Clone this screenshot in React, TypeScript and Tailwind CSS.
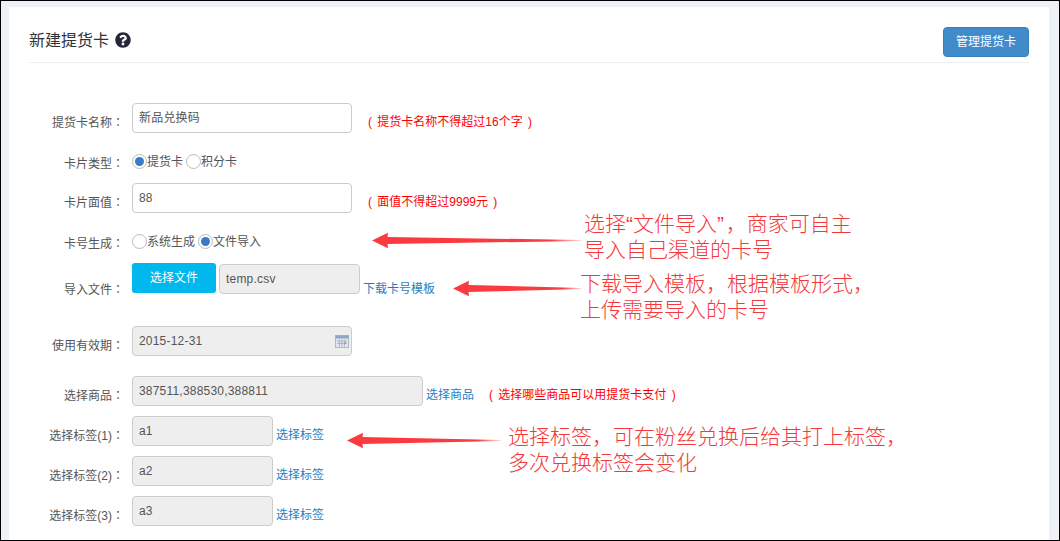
import { ReactNode } from "react";
import { FaQuestionCircle } from "react-icons/fa";

const FONT = "font-['Liberation_Sans','Noto_Sans_CJK_SC',sans-serif]";

function Arrow({ x, y, width, id }: { x: number; y: number; width: number; id: string }) {
  return (
    <svg
      className="absolute"
      style={{ left: x, top: y }}
      width={width}
      height={18}
      viewBox={`0 0 ${width} 18`}
    >
      <defs>
        <linearGradient id={id} x1="0" x2="1" y1="0" y2="0">
          <stop offset="0" stopColor="#fb3a3f" />
          <stop offset="0.85" stopColor="#fb3a3f" />
          <stop offset="1" stopColor="#fb3a3f" stopOpacity="0.15" />
        </linearGradient>
      </defs>
      <path
        d={`M0 8.5 L16 0.8 L15.5 5 L${width} 8 L${width} 9 L15.5 12 L16 16.2 Z`}
        fill={`url(#${id})`}
      />
    </svg>
  );
}

function Note({ x, y, lines }: { x: number; y: number; lines: string[] }) {
  return (
    <div
      className="absolute text-[21px] leading-[26px] font-light whitespace-nowrap text-[#f5383c]"
      style={{ left: x, top: y }}
    >
      {lines.map((l) => (
        <div key={l}>{l}</div>
      ))}
    </div>
  );
}

function Row({
  label,
  labelTop = "pt-[9px]",
  className = "",
  children,
}: {
  label: string;
  labelTop?: string;
  className?: string;
  children: ReactNode;
}) {
  return (
    <div className={`flex h-[30px] items-start ${className}`}>
      <label className={`w-[95px] shrink-0 text-right text-xs leading-5 text-[#555] ${labelTop}`}>
        {label}
        <span className="font-['Noto_Sans_CJK_TC',sans-serif]">：</span>
      </label>
      <div className="ml-2 flex h-full items-start">{children}</div>
    </div>
  );
}

function Field({
  value,
  width,
  disabled = true,
  children,
}: {
  value: string;
  width: string;
  disabled?: boolean;
  children?: ReactNode;
}) {
  return (
    <div
      className={`relative flex h-[30px] items-center rounded border border-[#ccc] px-[6px] text-xs tracking-[0.2px] text-[#555] ${width} ${
        disabled ? "bg-[#eee]" : "bg-white"
      }`}
    >
      {value}
      {children}
    </div>
  );
}

function Radio({ label, checked = false }: { label: string; checked?: boolean }) {
  return (
    <span className="flex items-center">
      <span className="flex size-[15px] items-center justify-center rounded-full border border-[#bbb] bg-white">
        {checked && <span className="size-[9px] rounded-full bg-[#3a7bc8]" />}
      </span>
      <span className="pt-[1px] text-xs leading-5 text-[#555]">{label}</span>
    </span>
  );
}

function LinkText({ children, className = "pt-[9px]" }: { children: ReactNode; className?: string }) {
  return (
    <a className={`ml-[3px] text-xs leading-5 whitespace-nowrap text-[#1f7ec2] ${className}`}>{children}</a>
  );
}

function Hint({ children, className = "" }: { children: ReactNode; className?: string }) {
  return (
    <span className={`pt-[9px] text-xs leading-5 whitespace-nowrap text-[#f00] [word-spacing:2px] ${className}`}>
      {children}
    </span>
  );
}

export default function App() {
  return (
    <div className={`relative flex h-[541px] w-[1060px] flex-col overflow-hidden border border-black bg-[#eef1f5] pt-[6px] pr-[10px] pl-2 ${FONT}`}>
      <div className="flex-1 bg-white px-5 pt-5">
        {/* Header */}
        <div className="flex h-[36px] items-start justify-between border-b border-[#eee]">
          <div className="flex h-[26px] items-center">
            <h1 className="pt-[2px] text-base leading-6 text-[#333]">新建提货卡</h1>
            <FaQuestionCircle className="ml-[6px] text-[16px] text-[#26263a]" />
          </div>
          <button className="h-[30px] w-[86px] rounded border border-[#3a7fbd] bg-[#428bca] text-xs text-white">
            管理提货卡
          </button>
        </div>

        {/* Form */}
        <form className="pt-10">
          <Row label="提货卡名称">
            <Field value="新品兑换码" width="w-[220px]" disabled={false} />
            <Hint className="ml-4">( 提货卡名称不得超过16个字 )</Hint>
          </Row>
          <Row label="卡片类型" labelTop="pt-[7px]" className="mt-[13px]">
            <div className="flex h-full items-center gap-[3px] pt-[1px]">
              <Radio label="提货卡" checked />
              <Radio label="积分卡" />
            </div>
          </Row>
          <Row label="卡片面值" className="mt-[7px]">
            <Field value="88" width="w-[220px]" disabled={false} />
            <Hint className="ml-4">( 面值不得超过9999元 )</Hint>
          </Row>
          <Row label="卡号生成" labelTop="pt-[7px]" className="mt-[13px]">
            <div className="flex h-full items-center gap-[3px] pt-[1px]">
              <Radio label="系统生成" />
              <Radio label="文件导入" checked />
            </div>
          </Row>
          <Row label="导入文件" labelTop="pt-4" className="mt-[7px]">
            <div className="flex h-[30px] w-[84px] items-center justify-center rounded-[3px] bg-[#00b7ee] text-xs text-white">
              选择文件
            </div>
            <div className="mt-[1px] ml-[3px]">
              <Field value="temp.csv" width="w-[141px]" />
            </div>
            <LinkText className="pt-4">下载卡号模板</LinkText>
          </Row>
          <Row label="使用有效期" className="mt-[33px]">
            <Field value="2015-12-31" width="w-[220px]">
              <svg className="absolute top-[7px] right-[2px]" width="14" height="14" viewBox="0 0 14 14">
                <rect x="0.5" y="1.5" width="13" height="12" fill="#dfe6f0" stroke="#a9b8cc" />
                <rect x="0.5" y="1.5" width="13" height="3" fill="#8fa6c4" />
                <path d="M2 7h10M2 9.5h10M4.5 5.5v7M7 5.5v7M9.5 5.5v7" stroke="#a9b8cc" strokeWidth="1" />
                <rect x="9" y="8" width="2" height="2" fill="#e08a7a" />
              </svg>
            </Field>
          </Row>
          <Row label="选择商品" className="mt-5">
            <Field value="387511,388530,388811" width="w-[291px]" />
            <LinkText>选择商品</LinkText>
            <Hint className="ml-[15px]">( 选择哪些商品可以用提货卡支付 )</Hint>
          </Row>
          {["a1", "a2", "a3"].map((tag, i) => (
            <Row key={tag} label={`选择标签(${i + 1})`} className="mt-[10px]">
              <Field value={tag} width="w-[141px]" />
              <LinkText>选择标签</LinkText>
            </Row>
          ))}
        </form>
      </div>

      {/* Annotations drawn over the form */}
      <Arrow id="a1" x={371} y={231} width={210} />
      <Arrow id="a2" x={452} y={279} width={129} />
      <Arrow id="a3" x={346} y={431} width={154} />
      <Note x={583} y={210} lines={["选择“文件导入” ，商家可自主".replace(" ", "\u200a"), "导入自己渠道的卡号"]} />
      <Note x={579} y={270} lines={["下载导入模板，根据模板形式，", "上传需要导入的卡号"]} />
      <Note x={507} y={423} lines={["选择标签，可在粉丝兑换后给其打上标签，", "多次兑换标签会变化"]} />
    </div>
  );
}
